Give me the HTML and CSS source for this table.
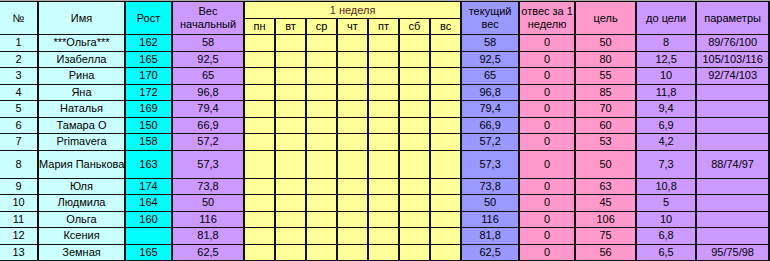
FILE: index.html
```html
<!DOCTYPE html>
<html lang="ru">
<head>
<meta charset="utf-8">
<title>Таблица</title>
<link rel="stylesheet" href="styles.css">
</head>
<body>
<table class="sheet">
  <colgroup>
    <col class="w-num"><col class="w-name"><col class="w-h"><col class="w-start">
    <col class="w-d"><col class="w-d"><col class="w-d"><col class="w-d"><col class="w-d"><col class="w-d"><col class="w-d">
    <col class="w-cur"><col class="w-loss"><col class="w-goal"><col class="w-left"><col class="w-par">
  </colgroup>
  <thead>
    <tr class="hr1">
      <th rowspan="2" class="c-lc">№</th>
      <th rowspan="2" class="c-lc">Имя</th>
      <th rowspan="2" class="c-cy">Рост</th>
      <th rowspan="2" class="c-lv">Вес<br>начальный</th>
      <th colspan="7" class="c-ye week">1 неделя</th>
      <th rowspan="2" class="c-bl">текущий<br>вес</th>
      <th rowspan="2" class="c-pk">отвес за 1<br>неделю</th>
      <th rowspan="2" class="c-pk">цель</th>
      <th rowspan="2" class="c-lv">до цели</th>
      <th rowspan="2" class="c-lv">параметры</th>
    </tr>
    <tr class="hr2">
      <th class="c-ye">пн</th><th class="c-ye">вт</th><th class="c-ye">ср</th><th class="c-ye">чт</th><th class="c-ye">пт</th><th class="c-ye">сб</th><th class="c-ye">вс</th>
    </tr>
  </thead>
  <tbody>
    <tr><td class="c-lc">1</td><td class="c-lc">***Ольга***</td><td class="c-cy">162</td><td class="c-lv">58</td><td class="c-ye"></td><td class="c-ye"></td><td class="c-ye"></td><td class="c-ye"></td><td class="c-ye"></td><td class="c-ye"></td><td class="c-ye"></td><td class="c-bl">58</td><td class="c-pk">0</td><td class="c-pk">50</td><td class="c-lv">8</td><td class="c-lv">89/76/100</td></tr>
    <tr><td class="c-lc">2</td><td class="c-lc">Изабелла</td><td class="c-cy">165</td><td class="c-lv">92,5</td><td class="c-ye"></td><td class="c-ye"></td><td class="c-ye"></td><td class="c-ye"></td><td class="c-ye"></td><td class="c-ye"></td><td class="c-ye"></td><td class="c-bl">92,5</td><td class="c-pk">0</td><td class="c-pk">80</td><td class="c-lv">12,5</td><td class="c-lv">105/103/116</td></tr>
    <tr><td class="c-lc">3</td><td class="c-lc">Рина</td><td class="c-cy">170</td><td class="c-lv">65</td><td class="c-ye"></td><td class="c-ye"></td><td class="c-ye"></td><td class="c-ye"></td><td class="c-ye"></td><td class="c-ye"></td><td class="c-ye"></td><td class="c-bl">65</td><td class="c-pk">0</td><td class="c-pk">55</td><td class="c-lv">10</td><td class="c-lv">92/74/103</td></tr>
    <tr><td class="c-lc">4</td><td class="c-lc">Яна</td><td class="c-cy">172</td><td class="c-lv">96,8</td><td class="c-ye"></td><td class="c-ye"></td><td class="c-ye"></td><td class="c-ye"></td><td class="c-ye"></td><td class="c-ye"></td><td class="c-ye"></td><td class="c-bl">96,8</td><td class="c-pk">0</td><td class="c-pk">85</td><td class="c-lv">11,8</td><td class="c-lv"></td></tr>
    <tr><td class="c-lc">5</td><td class="c-lc">Наталья</td><td class="c-cy">169</td><td class="c-lv">79,4</td><td class="c-ye"></td><td class="c-ye"></td><td class="c-ye"></td><td class="c-ye"></td><td class="c-ye"></td><td class="c-ye"></td><td class="c-ye"></td><td class="c-bl">79,4</td><td class="c-pk">0</td><td class="c-pk">70</td><td class="c-lv">9,4</td><td class="c-lv"></td></tr>
    <tr><td class="c-lc">6</td><td class="c-lc">Тамара О</td><td class="c-cy">150</td><td class="c-lv">66,9</td><td class="c-ye"></td><td class="c-ye"></td><td class="c-ye"></td><td class="c-ye"></td><td class="c-ye"></td><td class="c-ye"></td><td class="c-ye"></td><td class="c-bl">66,9</td><td class="c-pk">0</td><td class="c-pk">60</td><td class="c-lv">6,9</td><td class="c-lv"></td></tr>
    <tr><td class="c-lc">7</td><td class="c-lc">Primavera</td><td class="c-cy">158</td><td class="c-lv">57,2</td><td class="c-ye"></td><td class="c-ye"></td><td class="c-ye"></td><td class="c-ye"></td><td class="c-ye"></td><td class="c-ye"></td><td class="c-ye"></td><td class="c-bl">57,2</td><td class="c-pk">0</td><td class="c-pk">53</td><td class="c-lv">4,2</td><td class="c-lv"></td></tr>
    <tr class="tall"><td class="c-lc">8</td><td class="c-lc">Мария Панькова</td><td class="c-cy">163</td><td class="c-lv">57,3</td><td class="c-ye"></td><td class="c-ye"></td><td class="c-ye"></td><td class="c-ye"></td><td class="c-ye"></td><td class="c-ye"></td><td class="c-ye"></td><td class="c-bl">57,3</td><td class="c-pk">0</td><td class="c-pk">50</td><td class="c-lv">7,3</td><td class="c-lv">88/74/97</td></tr>
    <tr><td class="c-lc">9</td><td class="c-lc">Юля</td><td class="c-cy">174</td><td class="c-lv">73,8</td><td class="c-ye"></td><td class="c-ye"></td><td class="c-ye"></td><td class="c-ye"></td><td class="c-ye"></td><td class="c-ye"></td><td class="c-ye"></td><td class="c-bl">73,8</td><td class="c-pk">0</td><td class="c-pk">63</td><td class="c-lv">10,8</td><td class="c-lv"></td></tr>
    <tr><td class="c-lc">10</td><td class="c-lc">Людмила</td><td class="c-cy">164</td><td class="c-lv">50</td><td class="c-ye"></td><td class="c-ye"></td><td class="c-ye"></td><td class="c-ye"></td><td class="c-ye"></td><td class="c-ye"></td><td class="c-ye"></td><td class="c-bl">50</td><td class="c-pk">0</td><td class="c-pk">45</td><td class="c-lv">5</td><td class="c-lv"></td></tr>
    <tr><td class="c-lc">11</td><td class="c-lc">Ольга</td><td class="c-cy">160</td><td class="c-lv">116</td><td class="c-ye"></td><td class="c-ye"></td><td class="c-ye"></td><td class="c-ye"></td><td class="c-ye"></td><td class="c-ye"></td><td class="c-ye"></td><td class="c-bl">116</td><td class="c-pk">0</td><td class="c-pk">106</td><td class="c-lv">10</td><td class="c-lv"></td></tr>
    <tr><td class="c-lc">12</td><td class="c-lc">Ксения</td><td class="c-cy"></td><td class="c-lv">81,8</td><td class="c-ye"></td><td class="c-ye"></td><td class="c-ye"></td><td class="c-ye"></td><td class="c-ye"></td><td class="c-ye"></td><td class="c-ye"></td><td class="c-bl">81,8</td><td class="c-pk">0</td><td class="c-pk">75</td><td class="c-lv">6,8</td><td class="c-lv"></td></tr>
    <tr><td class="c-lc">13</td><td class="c-lc">Земная</td><td class="c-cy">165</td><td class="c-lv">62,5</td><td class="c-ye"></td><td class="c-ye"></td><td class="c-ye"></td><td class="c-ye"></td><td class="c-ye"></td><td class="c-ye"></td><td class="c-ye"></td><td class="c-bl">62,5</td><td class="c-pk">0</td><td class="c-pk">56</td><td class="c-lv">6,5</td><td class="c-lv">95/75/98</td></tr>
  </tbody>
</table>
</body>
</html>
```

FILE: styles.css
```css
html, body {
  margin: 0;
  padding: 0;
  background: #a8a8a8;
}
body {
  padding-top: 1px;
  font-family: "Liberation Sans", Arial, sans-serif;
  font-size: 11px;
  color: #000;
}
.sheet {
  border-collapse: collapse;
  table-layout: fixed;
  width: 769px;
}
.w-num { width: 38px; }
.w-name { width: 87px; }
.w-h { width: 47px; }
.w-start { width: 72px; }
.w-d { width: 31px; }
.w-cur { width: 58px; }
.w-loss { width: 56px; }
.w-goal { width: 61px; }
.w-left { width: 60px; }
.w-par { width: 73px; }

.sheet th, .sheet td {
  border: 1px solid #111;
  border-left-width: 2px;
  border-right-width: 2px;
  padding: 0;
  text-align: center;
  vertical-align: middle;
  font-weight: normal;
  line-height: 13px;
  white-space: nowrap;
  overflow: hidden;
}
.sheet th:first-child, .sheet td:first-child { border-left: none; }
.hr1 th { height: 16px; }
.hr2 th { height: 15px; }
.week { color: #5a1e1e; }
.sheet tbody tr { height: 16.5px; }
.sheet tbody tr.tall { height: 28px; }

.c-lc { background: #ccffff; }
.c-cy { background: #00ffff; }
.c-lv { background: #cc99ff; }
.c-ye { background: #ffff99; }
.c-bl { background: #9999ff; }
.c-pk { background: #ff99cc; }
```
